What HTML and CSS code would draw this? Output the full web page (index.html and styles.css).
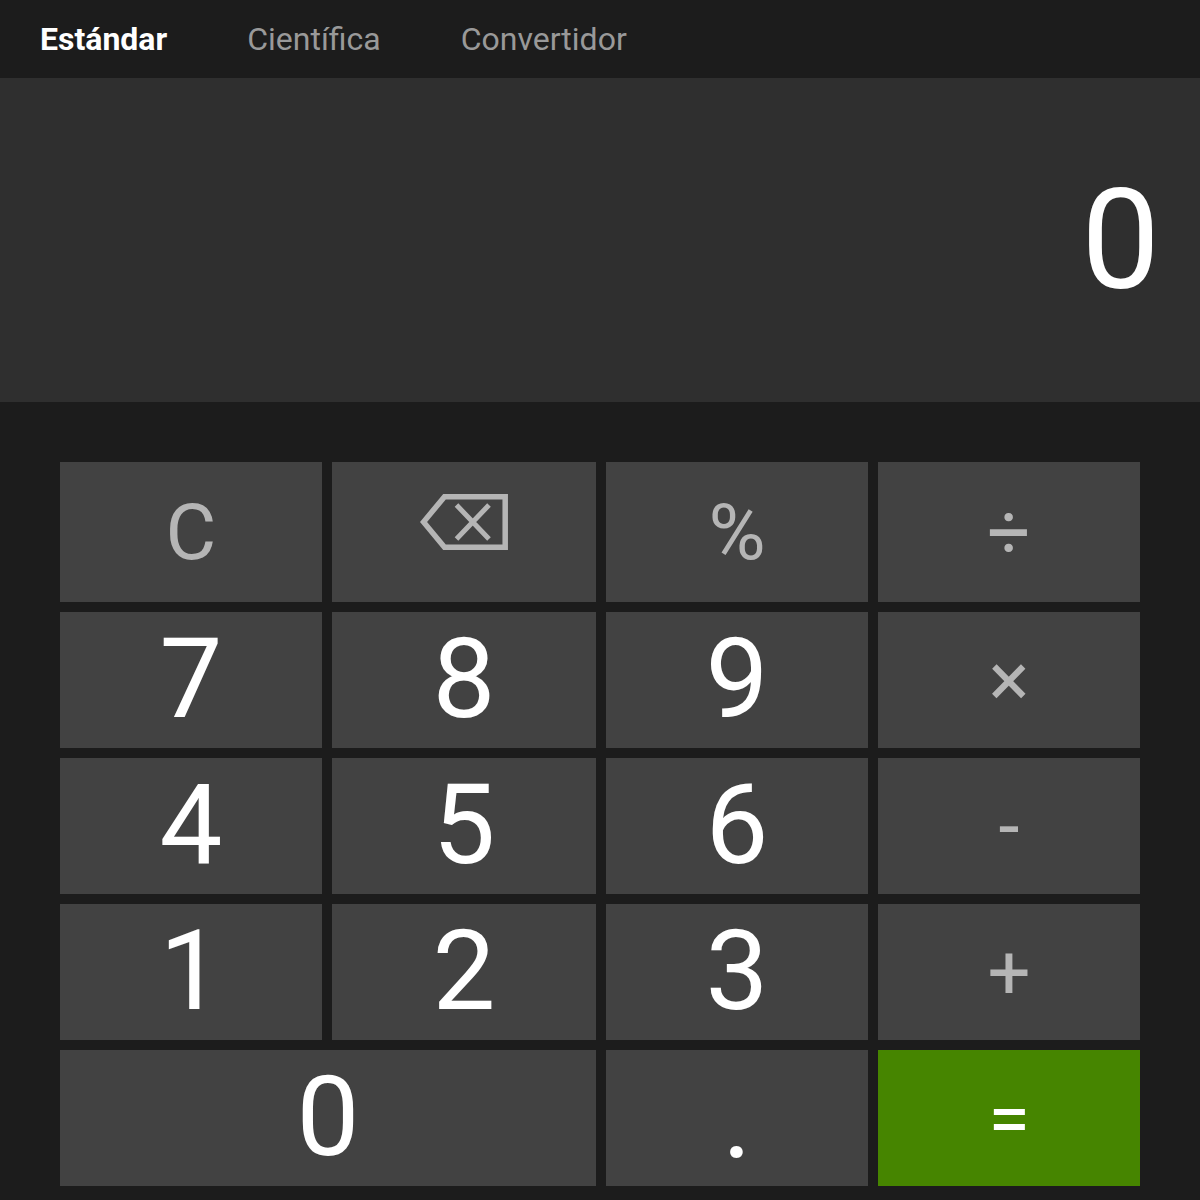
FILE: index.html
```html
<!DOCTYPE html>
<html lang="es">
<head>
  <meta charset="UTF-8" />
  <title>Calculadora</title>
  <link rel="stylesheet" href="styles.css">
</head>
<body>
  <nav class="tabs">
    <span class="tab active">Estándar</span>
    <span class="tab">Científica</span>
    <span class="tab">Convertidor</span>
  </nav>

  <div class="display">0</div>

  <div class="keypad">
    <button class="key op key-c">C</button>
    <button class="key op key-back" aria-label="Borrar">
      <svg width="88" height="56" viewBox="0 0 88 56">
        <path class="back-line" d="M85.2 2.75H24.5L3.5 28l21 25.25H85.2z" />
        <path class="back-line cross" d="M36.5 11L69 45M69 11L36.5 45" />
      </svg>
    </button>
    <button class="key op key-percent">%</button>
    <button class="key op key-sign">÷</button>
    <button class="key">7</button>
    <button class="key">8</button>
    <button class="key">9</button>
    <button class="key op key-sign">×</button>
    <button class="key">4</button>
    <button class="key">5</button>
    <button class="key">6</button>
    <button class="key op key-sign">-</button>
    <button class="key">1</button>
    <button class="key">2</button>
    <button class="key">3</button>
    <button class="key op key-sign key-plus">+</button>
    <button class="key wide">0</button>
    <button class="key key-dot">.</button>
    <button class="key key-sign equals">=</button>
  </div>
</body>
</html>
```
FILE: styles.css
```css
* { margin:0; padding:0; box-sizing:border-box; font-family:Roboto,"Liberation Sans",sans-serif; }
body { width:1200px; height:1200px; background:#1c1c1c; overflow:hidden; }

.tabs { display:flex; gap:80px; height:78px; padding-left:40px; align-items:center; }
.tab { font-size:32px; color:#999; }
.tab.active { color:#fff; font-weight:700; }

.display { height:324px; background:#2f2f2f; color:#fff; display:flex; align-items:center; justify-content:flex-end; padding-right:40px; font-size:140px; }

.keypad { display:grid; grid-template-columns:262px 264px 262px 262px; grid-template-rows:140px repeat(4, 136px); gap:10px; padding:60px 60px 0; }
.key { border:none; background:#424242; color:#fff; font-size:112px; padding-bottom:4px; display:flex; align-items:center; justify-content:center; }
.key.wide { grid-column:span 2; }
.key.op { color:#b5b5b5; padding-bottom:0; }
.key-c { font-size:78px; }
.key-percent { font-size:78px; }
.key-sign { font-size:76px; }
.key.key-plus { padding-top:2px; }
.key.key-dot { padding-bottom:0; }
.key.key-back { padding-bottom:20px; }
.back-line { fill:none; stroke:#b5b5b5; stroke-width:5.5; }
.cross { stroke-width:5; }
.key.equals { background:#468500; color:#fff; padding-bottom:0; padding-top:2px; }
```
